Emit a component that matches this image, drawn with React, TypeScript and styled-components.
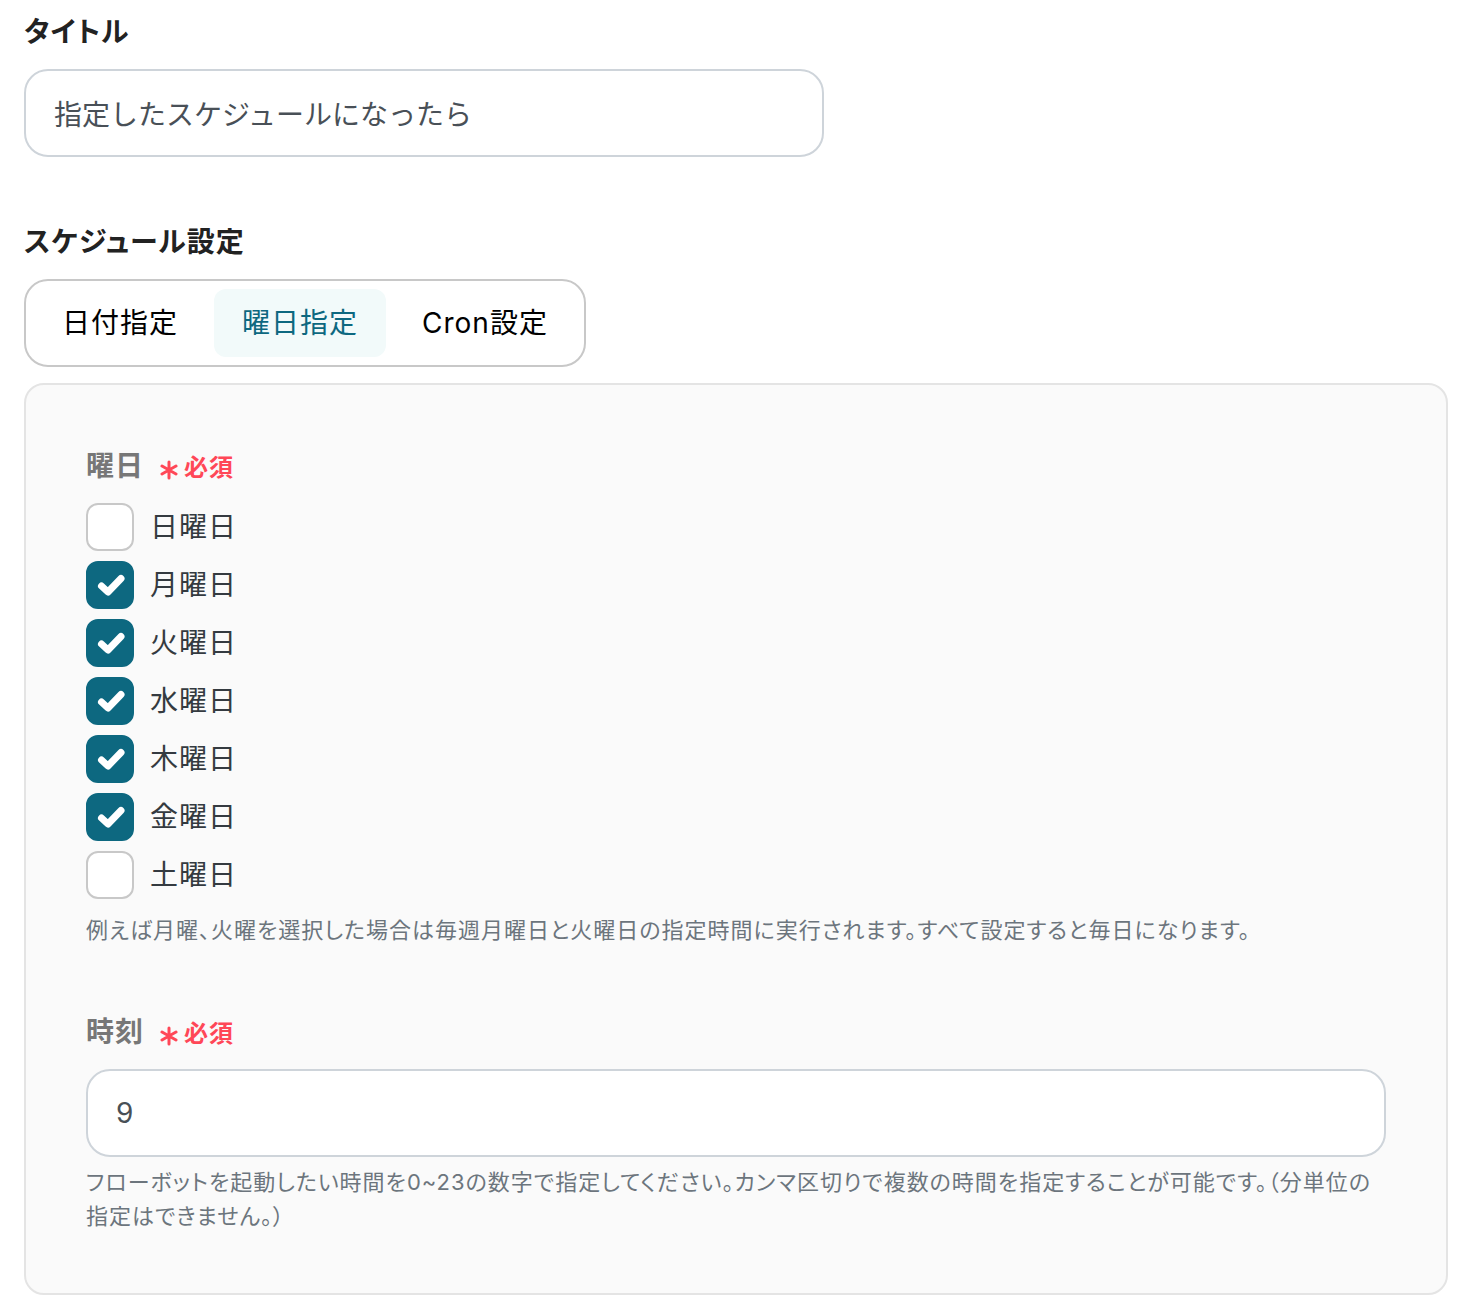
import { useId, useState } from "react";
import styled, { createGlobalStyle } from "styled-components";

const GlobalStyle = createGlobalStyle`
  *, *::before, *::after { box-sizing: border-box; }
  body {
    margin: 0;
    background: #fff;
    color: #222;
    font-family: Inter, "Noto Sans CJK JP", sans-serif;
    font-size: 28px;
    line-height: 42px;
    letter-spacing: 1px;
    font-feature-settings: "palt";
  }
`;

const Form = styled.form`
  display: flex;
  flex-direction: column;
  gap: 64px;
  padding: 11px 24px 14px;
`;

const Section = styled.div`
  display: flex;
  flex-direction: column;
  gap: 16px;
`;

const Heading = styled.label`
  font-weight: 700;
  color: #222;
`;

const TextInput = styled.input<{ $maxWidth?: string }>`
  width: 100%;
  max-width: ${(p) => p.$maxWidth ?? "none"};
  height: 88px;
  padding: 0 28px;
  border: 2px solid #ced4da;
  border-radius: 24px;
  background: #fff;
  color: #495057;
  font-family: inherit;
  font-size: 28px;
  font-feature-settings: normal;
  outline: none;
`;

const Tabs = styled.div`
  display: flex;
  align-self: flex-start;
  gap: 8px;
  padding: 8px;
  border: 2px solid #c8c8c8;
  border-radius: 24px;
`;

const Tab = styled.button<{ $active: boolean }>`
  height: 68px;
  padding: 0 28px;
  border: 0;
  border-radius: 12px;
  background: ${(p) => (p.$active ? "#f2fafa" : "transparent")};
  color: ${(p) => (p.$active ? "#0d6880" : "#000")};
  font: inherit;
  letter-spacing: inherit;
  font-feature-settings: inherit;
  cursor: pointer;
`;

const Panel = styled.div`
  display: flex;
  flex-direction: column;
  gap: 64px;
  padding: 60px;
  border: 2px solid #e4e4e4;
  border-radius: 20px;
  background: #fafafa;
`;

const Group = styled.div`
  display: flex;
  flex-direction: column;
`;

const FieldTitle = styled.div`
  display: flex;
  align-items: center;
  gap: 16px;
  margin-bottom: 16px;
  color: #777;
  font-weight: 700;
`;

const Required = styled.span`
  display: inline-flex;
  align-items: center;
  gap: 6px;
  padding-top: 4px;
  color: #ff4757;
  font-size: 24px;
  font-weight: 700;
  line-height: 36px;
`;

const Star = styled.svg`
  width: 18px;
  height: 20px;
  margin-top: 4px;
`;

const DayList = styled.div`
  display: flex;
  flex-direction: column;
  align-items: flex-start;
  gap: 10px;
  margin-bottom: 6px;
`;

const Day = styled.label`
  display: grid;
  grid-template-columns: 48px auto;
  align-items: center;
  column-gap: 16px;
  color: #343a40;
  cursor: pointer;
`;

const Box = styled.input`
  grid-area: 1 / 1;
  appearance: none;
  width: 48px;
  height: 48px;
  margin: 0;
  border: 2px solid #c8c8c8;
  border-radius: 12px;
  background: #fff;
  cursor: pointer;

  &:checked {
    border-color: #0d6880;
    background: #0d6880;
  }
`;

const Tick = styled.svg`
  grid-area: 1 / 1;
  width: 48px;
  height: 48px;
  pointer-events: none;
`;

const Help = styled.p`
  margin: 8px 0 0;
  color: #6c757d;
  font-size: 22px;
  line-height: 34px;
`;

function RequiredMark() {
  return (
    <Required>
      <Star viewBox="0 0 18 20" aria-hidden="true">
        <path
          d="M9 2v16M2 6l14 8M16 6L2 14"
          fill="none"
          stroke="currentColor"
          strokeWidth="3"
          strokeLinecap="round"
        />
      </Star>
      必須
    </Required>
  );
}

const MODES = ["日付指定", "曜日指定", "Cron設定"];
const DAYS = ["日曜日", "月曜日", "火曜日", "水曜日", "木曜日", "金曜日", "土曜日"];

export default function App() {
  const id = useId();
  const [mode, setMode] = useState(1);
  const [days, setDays] = useState([false, true, true, true, true, true, false]);

  const toggle = (index: number) =>
    setDays((prev) => prev.map((on, i) => (i === index ? !on : on)));

  return (
    <>
      <GlobalStyle />
      <Form lang="ja" onSubmit={(e) => e.preventDefault()}>
        <Section>
          <Heading htmlFor={`${id}-title`}>タイトル</Heading>
          <TextInput
            id={`${id}-title`}
            $maxWidth="800px"
            type="text"
            defaultValue="指定したスケジュールになったら"
          />
        </Section>
        <Section>
          <Heading as="div" id={`${id}-mode`}>
            スケジュール設定
          </Heading>
          <Tabs role="group" aria-labelledby={`${id}-mode`}>
            {MODES.map((label, i) => (
              <Tab
                key={label}
                type="button"
                aria-pressed={mode === i}
                $active={mode === i}
                onClick={() => setMode(i)}
              >
                {label}
              </Tab>
            ))}
          </Tabs>
          <Panel>
            <Group role="group" aria-labelledby={`${id}-days`}>
              <FieldTitle id={`${id}-days`}>
                曜日
                <RequiredMark />
              </FieldTitle>
              <DayList>
                {DAYS.map((day, i) => (
                  <Day key={day}>
                    <Box type="checkbox" checked={days[i]} onChange={() => toggle(i)} />
                    {days[i] && (
                      <Tick viewBox="0 0 48 48" aria-hidden="true">
                        <path
                          d="M15.5 25l6.5 6L35 17.5"
                          fill="none"
                          stroke="#fff"
                          strokeWidth="7"
                          strokeLinecap="round"
                          strokeLinejoin="round"
                        />
                      </Tick>
                    )}
                    {day}
                  </Day>
                ))}
              </DayList>
              <Help>
                例えば月曜、火曜を選択した場合は毎週月曜日と火曜日の指定時間に実行されます。すべて設定すると毎日になります。
              </Help>
            </Group>
            <Group>
              <FieldTitle as="label" htmlFor={`${id}-hour`}>
                時刻
                <RequiredMark />
              </FieldTitle>
              <TextInput
                id={`${id}-hour`}
                type="text"
                defaultValue="9"
                aria-describedby={`${id}-hour-help`}
              />
              <Help id={`${id}-hour-help`}>
                フローボットを起動したい時間を0~23の数字で指定してください。カンマ区切りで複数の時間を指定することが可能です。（分単位の指定はできません。）
              </Help>
            </Group>
          </Panel>
        </Section>
      </Form>
    </>
  );
}
